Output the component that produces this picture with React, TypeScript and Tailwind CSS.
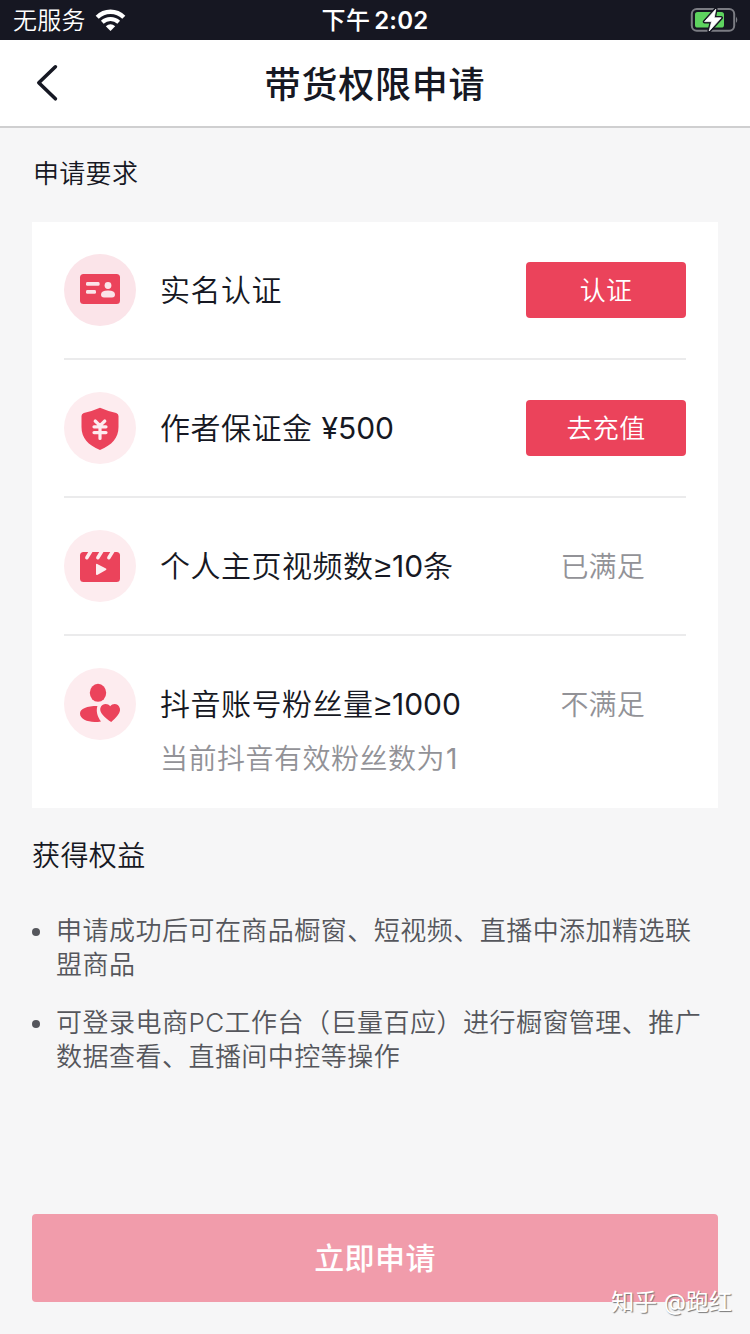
import type { ReactNode } from "react";

function StatusBar() {
  return (
    <div className="flex h-10 items-center justify-between bg-[#161722] text-white">
      <div className="flex w-[240px] items-center pl-[13px]">
        <span className="pt-0.5 text-[24px] leading-[38px] tracking-[0.3px]">无服务</span>
        <svg className="ml-[9px]" width="31" height="24" viewBox="0 0 31 24" fill="none">
          <path d="M2.2 9.2A19 19 0 0 1 28.8 9.2" stroke="#fff" strokeWidth="4.4" />
          <path d="M7.3 14.2A12 12 0 0 1 23.7 14.2" stroke="#fff" strokeWidth="4" />
          <path d="M15.5 23L10.8 18.2Q15.5 14.2 20.2 18.2Z" fill="#fff" />
        </svg>
      </div>
      <div className="flex items-center pt-0.5 text-[24px] leading-[38px] font-medium">
        <span className="tracking-[0.3px]">下午</span>
        <span className="ml-[4px] font-semibold tracking-[0.2px]">2:02</span>
      </div>
      <div className="flex w-[240px] justify-end pr-[11px]">
        <svg width="49" height="26" viewBox="0 0 49 26">
          <rect x="1.8" y="2.1" width="42.4" height="21.6" rx="5" fill="none" stroke="#7b7c83" strokeWidth="2" />
          <path d="M46 9.5Q48.6 12.8 46 16Z" fill="#7b7c83" />
          <rect x="5" y="5" width="29" height="15.5" rx="2.6" fill="#5ed35f" />
          <path d="M25.8 2.2L14.6 14.6H21.6L19.2 24L31.2 10.8H24.2Z" fill="#161722" stroke="#161722" strokeWidth="3.6" strokeLinejoin="round" />
          <path d="M25.8 2.2L14.6 14.6H21.6L19.2 24L31.2 10.8H24.2Z" fill="#fff" stroke="#fff" strokeWidth="0.8" strokeLinejoin="round" />
        </svg>
      </div>
    </div>
  );
}

function Header() {
  return (
    <header className="grid h-[88px] grid-cols-[1fr_auto_1fr] items-center border-b-2 border-[#cfcfd0] bg-white">
      <button className="ml-[34px] w-[26px]" aria-label="返回">
        <svg width="26" height="40" viewBox="0 0 26 40" fill="none">
          <path d="M21.4 3.8L4.8 19.8L21.4 35.8" stroke="#161823" strokeWidth="3.6" strokeLinecap="round" strokeLinejoin="round" />
        </svg>
      </button>
      <h1 className="pt-1 text-[36px] leading-[82px] font-medium tracking-[0.8px]">带货权限申请</h1>
    </header>
  );
}

const IdCard = () => (
  <>
    <rect x="16" y="20" width="40" height="30" rx="3.5" fill="#eb435b" />
    <rect x="22" y="28" width="13.6" height="3.8" rx="1.4" fill="#fbe4e9" />
    <rect x="22" y="36" width="10" height="3.8" rx="1.4" fill="#fbe4e9" />
    <circle cx="44" cy="31.5" r="3.4" fill="#fbe4e9" />
    <path d="M37 40.5Q37 36.6 44 36.6T51 40.5Q51 43.4 48 43.4H40Q37 43.4 37 40.5Z" fill="#fbe4e9" />
  </>
);

const Shield = () => (
  <>
    <path d="M36 15.8Q44 19.4 52.2 20.9Q54.5 21.6 54.5 24V35C54.5 46 48 53 36 58C24 53 17.5 46 17.5 35V24Q17.5 21.6 19.8 20.9Q28 19.4 36 15.8Z" fill="#eb435b" />
    <path d="M31.2 29L36 33.6L40.8 29M36 34V46.4M30 34.8H42M30 40.6H42" stroke="#fdecef" strokeWidth="3.2" strokeLinecap="round" strokeLinejoin="round" fill="none" />
  </>
);

const Clapper = () => (
  <>
    <rect x="16" y="22" width="40" height="30" rx="3.5" fill="#eb435b" />
    <path d="M22.9 27.6L27.4 20.2M33.9 27.6L38.4 20.2M44.9 27.6L49.4 20.2" stroke="#fdecef" strokeWidth="3.6" strokeLinecap="round" />
    <path d="M32.8 34.6L41.6 39.2L32.8 44.2Z" fill="#fdecef" stroke="#fdecef" strokeWidth="1.6" strokeLinejoin="round" />
  </>
);

const Fan = () => (
  <>
    <ellipse cx="34" cy="24.8" rx="8.2" ry="9" fill="#eb435b" />
    <path d="M33.4 38C23 38 16 40.5 16 45.6C16 51 23 54 30.6 54C33 54 35 53.8 37 53.4C33.5 49 31.8 43 33.4 38Z" fill="#eb435b" />
    <path d="M46.2 38.2C43.5 34.8 37.6 35.6 36.3 40.2C35.3 45 41 49.6 47.2 54C51.5 50.4 57 45 55.9 40.6C54.6 35.4 49 34.8 46.2 38.2Z" fill="#eb435b" />
  </>
);

function ActionButton({ children }: { children: ReactNode }) {
  return (
    <button className="h-14 w-40 rounded bg-[#eb435b] pt-0.5 text-[26px] leading-[54px] tracking-[0.3px] text-white">{children}</button>
  );
}

function Status({ children }: { children: ReactNode }) {
  return <span className="mr-[41px] pt-0.5 text-[28px] leading-10 tracking-[0.2px] text-[#929297]">{children}</span>;
}

type RowProps = { icon: ReactNode; tint?: string; title: ReactNode; note?: ReactNode; action: ReactNode };

function Requirement({ icon, tint = "#fdecef", title, note, action }: RowProps) {
  return (
    <li className="border-b-2 border-[#ebebec] last:h-[172px] last:border-b-0">
      <div className="flex h-[136px] items-center">
        <svg className="shrink-0" width="72" height="72" viewBox="0 0 72 72">
          <circle cx="36" cy="36" r="36" fill={tint} />
          {icon}
        </svg>
        <span className="ml-6 grow text-[30px] leading-10 tracking-[0.5px] whitespace-nowrap">{title}</span>
        {action}
      </div>
      {note && <p className="-mt-[33px] ml-24 text-[28px] leading-10 tracking-[0.5px] text-[#929297]">{note}</p>}
    </li>
  );
}

function Benefit({ lines }: { lines: string[] }) {
  return (
    <li className="flex">
      <span className="mt-[14px] mr-4 size-2 shrink-0 rounded-full bg-[#55565c]" />
      <p className="text-[26px] leading-[34px] tracking-[0.48px] whitespace-nowrap">
        {lines.map((line) => (
          <span key={line} className="block">{line}</span>
        ))}
      </p>
    </li>
  );
}

const Latin = ({ children }: { children: ReactNode }) => <span className="font-normal tracking-[0px]">{children}</span>;

const AtLeast = () => <span className="ml-px font-['Liberation_Sans',sans-serif] font-normal tracking-[1px]">≥</span>;

export default function App() {
  return (
    <div className="relative flex h-[1334px] w-[750px] flex-col overflow-hidden bg-[#f6f6f7] font-['Inter','Noto_Sans_CJK_SC',sans-serif] font-[350] text-[#161823]">
      <StatusBar />
      <Header />
      <main className="flex grow flex-col px-8 pb-8">
        <h2 className="mt-[26px] ml-[1px] text-[26px] leading-10 font-[350] tracking-[0.3px]">申请要求</h2>
        <ul className="mt-[28px] h-[586px] bg-white px-8">
          <Requirement icon={<IdCard />} tint="#fbe4e9" title="实名认证" action={<ActionButton>认证</ActionButton>} />
          <Requirement icon={<Shield />} title={<>作者保证金 <Latin>¥500</Latin></>} action={<ActionButton>去充值</ActionButton>} />
          <Requirement icon={<Clapper />} title={<>个人主页视频数<AtLeast /><Latin>10</Latin>条</>} action={<Status>已满足</Status>} />
          <Requirement icon={<Fan />} title={<>抖音账号粉丝量<AtLeast /><Latin>1000</Latin></>} note={<>当前抖音有效粉丝数为<span className="ml-px font-normal">1</span></>} action={<Status>不满足</Status>} />
        </ul>
        <h2 className="mt-[28px] text-[28px] leading-10 font-[350] tracking-[0.4px]">获得权益</h2>
        <ul className="mt-[38px] flex flex-col gap-6 text-[#55565c]">
          <Benefit lines={["申请成功后可在商品橱窗、短视频、直播中添加精选联", "盟商品"]} />
          <Benefit lines={["可登录电商PC工作台（巨量百应）进行橱窗管理、推广", "数据查看、直播间中控等操作"]} />
        </ul>
        <button className="mt-auto h-[88px] rounded bg-[#f19cab] text-[30px] leading-[88px] font-medium tracking-[0.4px] text-white">立即申请</button>
      </main>
      <div className="absolute right-[18px] bottom-[14px] text-[23px] leading-9 font-normal whitespace-nowrap text-white [text-shadow:1px_1px_1px_#777]">知乎 @跑红</div>
    </div>
  );
}
